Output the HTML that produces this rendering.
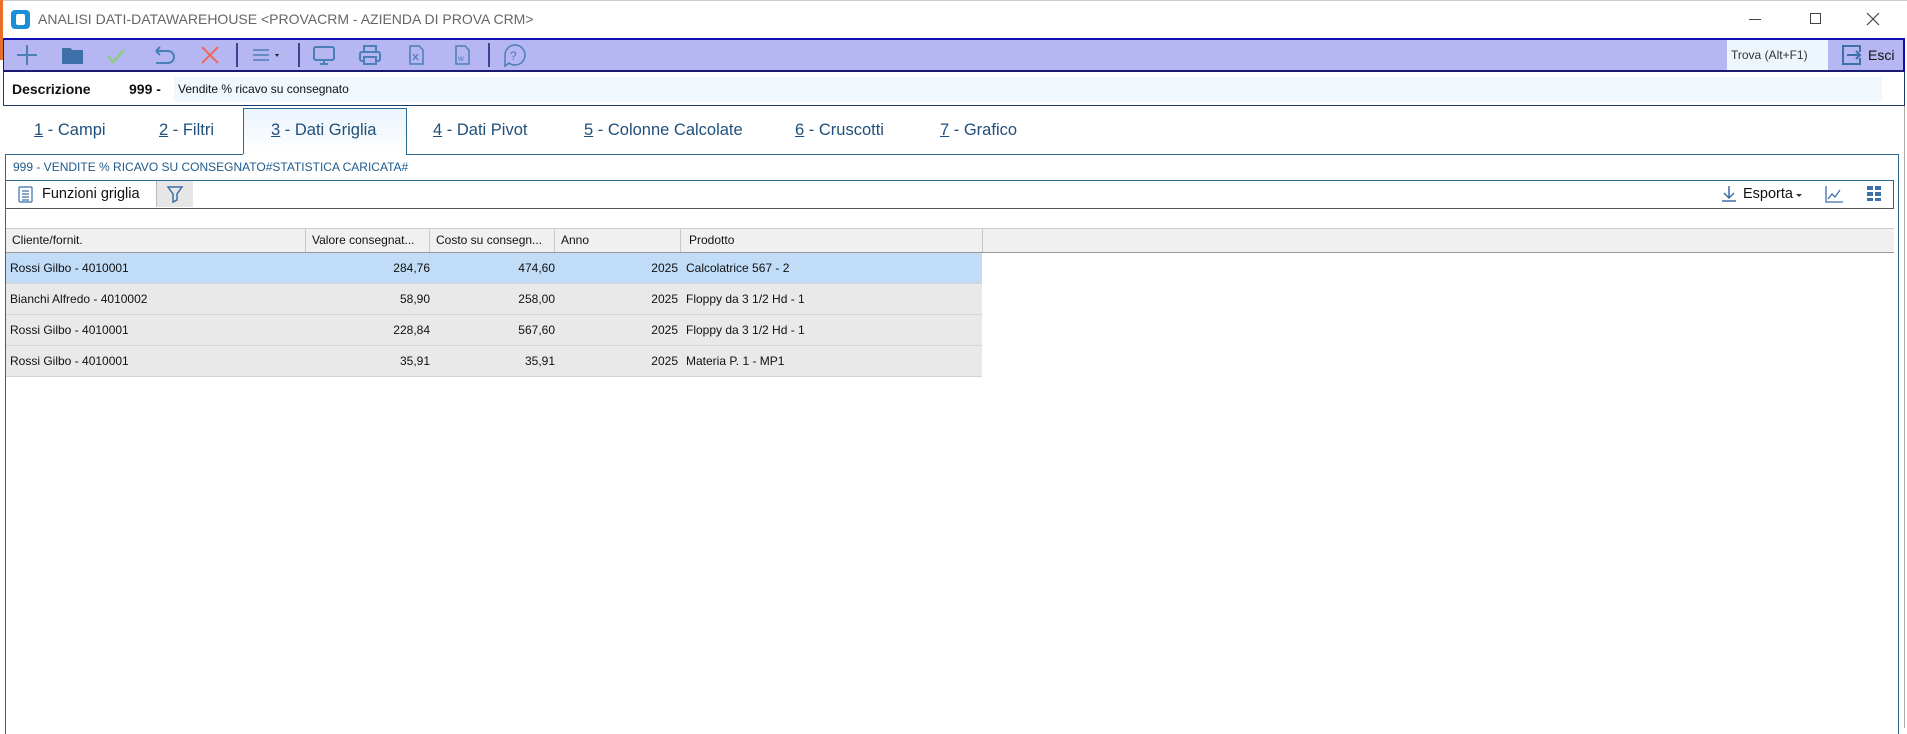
<!DOCTYPE html>
<html><head><meta charset="utf-8"><style>
*{margin:0;padding:0;box-sizing:border-box}
body{width:1907px;height:728px;overflow:hidden;background:#fff;font-family:"Liberation Sans",sans-serif;position:relative}
.a{position:absolute}
.ic{position:absolute}
.tab{position:absolute;top:121px;font-size:16.5px;color:#1f4f7a}
.tab u{text-decoration:underline}
.gh{position:absolute;top:229px;height:23px;font-size:12px;color:#111;line-height:23px;border-right:1px solid #c8c8c8;padding-left:6px;white-space:nowrap;overflow:hidden}
.row{position:absolute;left:6px;width:976px;height:31px;border-bottom:1px solid #d4d4d4;font-size:12px;color:#111;line-height:31px}
.row span{position:absolute;white-space:nowrap}
.r{text-align:right}
</style></head><body>
<div class="a" style="left:0;top:0;width:3px;height:60px;background:#e8702a"></div>
<div class="a" style="left:3px;top:0;width:1904px;height:38px;background:#fff;border-top:1px solid #ccc"></div>
<div class="a" style="left:11px;top:10px;width:19px;height:19px;background:#1a8fd8;border-radius:4px"><div class="a" style="left:5px;top:4px;width:9px;height:11px;background:#fff;border-radius:2px"></div></div>
<div class="a" style="left:38px;top:11px;font-size:14px;color:#666">ANALISI DATI-DATAWAREHOUSE &lt;PROVACRM - AZIENDA DI PROVA CRM&gt;</div>
<div class="a" style="left:1749px;top:19px;width:12px;height:1px;background:#444"></div>
<div class="a" style="left:1810px;top:13px;width:11px;height:11px;border:1px solid #444"></div>
<svg class="ic" style="left:1866px;top:12px" width="14" height="14"><path d="M1 1L13 13M13 1L1 13" stroke="#444" stroke-width="1.2"/></svg>

<div class="a" style="left:3px;top:38px;width:1902px;height:34px;background:#b6b6f2;border-top:2px solid #1010b0;border-bottom:2px solid #1a1a70;border-left:1px solid #1a1a70;border-right:2px solid #1010b0"></div>
<svg class="ic" style="left:0;top:38px" width="540" height="34" fill="none" stroke="#4a7fb8" stroke-width="2">
<path d="M27 7v20M17 17h20"/>
<path d="M63 11h7l2 2h10v12H63z" fill="#3d6fa8" stroke="#3d6fa8"/>
<path d="M108 18l5 6 11-12" stroke="#8ccf7e" stroke-width="2.5"/>
<path d="M156 13h12a6 6 0 0 1 0 12h-12M156 13l4-4M156 13l4 4"/>
<path d="M202 9l16 16M218 9l-16 16" stroke="#ee6a5a"/>
<path d="M237 5v24" stroke="#1a1a70" stroke-width="1.5"/>
<path d="M253 12h16M253 17h16M253 22h16" stroke-width="1.5"/><path d="M275 16h4l-2 3z" fill="#222" stroke="none"/>
<path d="M299 5v24" stroke="#1a1a70" stroke-width="1.5"/>
<rect x="314" y="9" width="20" height="13" rx="2"/><path d="M320 26h8M324 22v4"/>
<rect x="360" y="14" width="20" height="9" rx="2"/><rect x="364" y="8" width="12" height="6"/><rect x="364" y="19" width="12" height="7" fill="#b6b6f2"/>
<path d="M410 8h9l4 4v14h-13z" stroke-width="1.5"/><path d="M413 16l5 6M418 16l-5 6" stroke-width="1.3"/>
<path d="M456 8h9l4 4v14h-13z" stroke-width="1.5"/><text x="458" y="23" font-size="8" fill="#4a7fb8" stroke="none" font-family="Liberation Sans">w</text>
<path d="M489 5v24" stroke="#1a1a70" stroke-width="1.5"/>
<path d="M505 17a10 10 0 1 1 4 8l-4 3z" stroke-width="1.5"/><text x="510" y="22" font-size="12" fill="#4a7fb8" stroke="none" font-family="Liberation Sans">?</text>
</svg>
<div class="a" style="left:1727px;top:40px;width:101px;height:30px;background:#eef6fd;font-size:12px;color:#333;line-height:30px;padding-left:4px">Trova (Alt+F1)</div>
<svg class="ic" style="left:1840px;top:44px" width="24" height="22" fill="none" stroke="#3d6fa8" stroke-width="2"><path d="M9 2H3v18h17v-6M20 8V2H9"/><path d="M7 11h13M16 7l4 4-4 4"/></svg>
<div class="a" style="left:1868px;top:47px;font-size:14px;color:#111">Esci</div>

<div class="a" style="left:3px;top:72px;width:1902px;height:34px;border-left:1px solid #1a3a6a;border-right:1px solid #1a3a6a;border-bottom:1px solid #1a3a6a"></div>
<div class="a" style="left:12px;top:81px;font-size:14px;font-weight:bold;color:#111">Descrizione</div>
<div class="a" style="left:129px;top:81px;font-size:14px;font-weight:bold;color:#111">999 -</div>
<div class="a" style="left:174px;top:77px;width:1708px;height:25px;background:#f0f7fd;font-size:12px;color:#111;line-height:25px;padding-left:4px">Vendite % ricavo su consegnato</div>
<div class="a" style="left:1904px;top:106px;width:1px;height:622px;background:#aaa"></div>

<div class="a" style="left:243px;top:108px;width:164px;height:47px;background:linear-gradient(#eaf4fc,#fff);border:1px solid #2e6a90;border-bottom:none"></div>
<div class="tab" style="left:34px"><u>1</u> - Campi</div>
<div class="tab" style="left:159px"><u>2</u> - Filtri</div>
<div class="tab" style="left:271px"><u>3</u> - Dati Griglia</div>
<div class="tab" style="left:433px"><u>4</u> - Dati Pivot</div>
<div class="tab" style="left:584px"><u>5</u> - Colonne Calcolate</div>
<div class="tab" style="left:795px"><u>6</u> - Cruscotti</div>
<div class="tab" style="left:940px"><u>7</u> - Grafico</div>

<div class="a" style="left:5px;top:154px;width:1894px;height:580px;border:1px solid #2e6a90;border-bottom:none"></div>
<div class="a" style="left:243px;top:154px;width:163px;height:1px;background:#fff"></div>
<div class="a" style="left:13px;top:160px;font-size:12px;color:#1f5a8a">999 - VENDITE % RICAVO SU CONSEGNATO#STATISTICA CARICATA#</div>
<div class="a" style="left:6px;top:180px;width:1888px;height:29px;border-top:1px solid #2e6a90;border-bottom:1px solid #555;border-right:1px solid #555"></div>
<svg class="ic" style="left:18px;top:186px" width="16" height="17" fill="none" stroke="#3d6fa8" stroke-width="1.2"><rect x="1" y="1" width="13" height="15" rx="1"/><path d="M4 5h7M4 8h7M4 11h7M4 14h7"/></svg>
<div class="a" style="left:42px;top:186px;font-size:14.5px;color:#111">Funzioni griglia</div>
<div class="a" style="left:156px;top:181px;width:37px;height:26px;background:#e6e6e6;border-left:1px solid #bbb"></div>
<svg class="ic" style="left:166px;top:185px" width="18" height="18" fill="none" stroke="#3d6fa8" stroke-width="1.5"><path d="M2 2h14l-5 7v6l-4 2V9z"/></svg>
<svg class="ic" style="left:1720px;top:185px" width="18" height="18" fill="none" stroke="#3d6fa8" stroke-width="1.5"><path d="M9 1v12M4 8l5 5 5-5M2 16h14"/></svg>
<div class="a" style="left:1743px;top:186px;font-size:14.5px;color:#111">Esporta</div>
<div class="a" style="left:1796px;top:194px;border:3px solid transparent;border-top:3px solid #333"></div>
<svg class="ic" style="left:1824px;top:185px" width="20" height="18" fill="none" stroke="#3d6fa8" stroke-width="1.3"><path d="M2 1v16h17M4 14l4-5 3 3 5-7"/></svg>
<svg class="ic" style="left:1867px;top:186px" width="14" height="15" fill="#3d6fa8"><rect x="0" y="0" width="6" height="4"/><rect x="8" y="0" width="6" height="4"/><rect x="0" y="6" width="6" height="4"/><rect x="8" y="6" width="6" height="4"/><rect x="0" y="12" width="6" height="3"/><rect x="8" y="12" width="6" height="3"/></svg>

<div class="a" style="left:6px;top:228px;width:1888px;height:25px;background:#f0f0f0;border-top:1px solid #ccc;border-bottom:1px solid #999"></div>
<div class="gh" style="left:6px;width:300px">Cliente/fornit.</div>
<div class="gh" style="left:306px;width:124px">Valore consegnat...</div>
<div class="gh" style="left:430px;width:125px">Costo su consegn...</div>
<div class="gh" style="left:555px;width:126px">Anno</div>
<div class="gh" style="left:681px;width:302px;padding-left:8px">Prodotto</div>

<div class="row" style="top:253px;background:#c1dcf7">
<span style="left:4px">Rossi Gilbo - 4010001</span><span class="r" style="right:552px">284,76</span><span class="r" style="right:427px">474,60</span><span class="r" style="right:304px">2025</span><span style="left:680px">Calcolatrice 567 - 2</span></div>
<div class="row" style="top:284px;background:#e9e9e9">
<span style="left:4px">Bianchi Alfredo - 4010002</span><span class="r" style="right:552px">58,90</span><span class="r" style="right:427px">258,00</span><span class="r" style="right:304px">2025</span><span style="left:680px">Floppy da 3 1/2 Hd - 1</span></div>
<div class="row" style="top:315px;background:#e9e9e9">
<span style="left:4px">Rossi Gilbo - 4010001</span><span class="r" style="right:552px">228,84</span><span class="r" style="right:427px">567,60</span><span class="r" style="right:304px">2025</span><span style="left:680px">Floppy da 3 1/2 Hd - 1</span></div>
<div class="row" style="top:346px;background:#e9e9e9">
<span style="left:4px">Rossi Gilbo - 4010001</span><span class="r" style="right:552px">35,91</span><span class="r" style="right:427px">35,91</span><span class="r" style="right:304px">2025</span><span style="left:680px">Materia P. 1 - MP1</span></div>
</body></html>
